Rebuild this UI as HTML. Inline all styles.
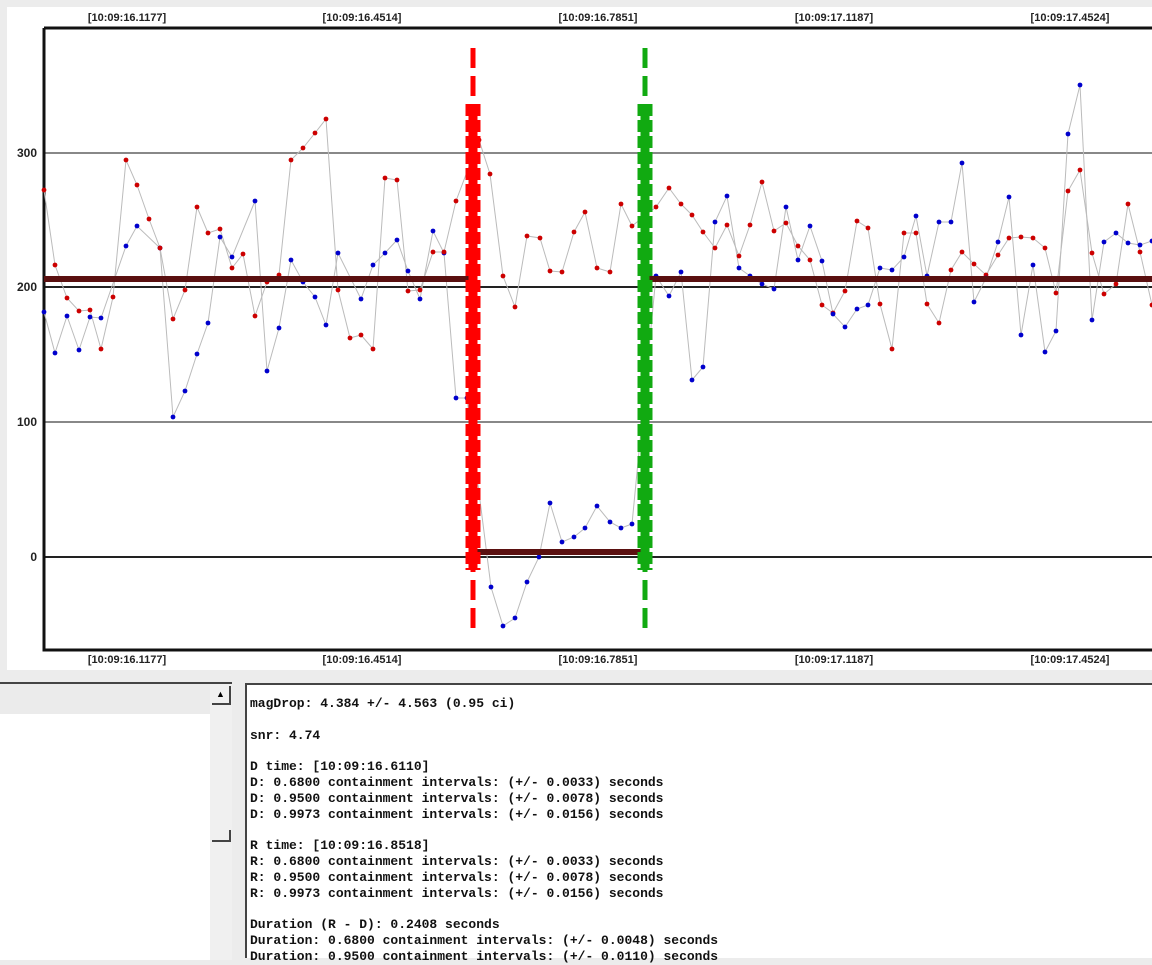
<!DOCTYPE html>
<html><head><meta charset="utf-8"><style>
html,body{margin:0;padding:0;width:1152px;height:958px;overflow:hidden;background:#ececec;}
#chart{position:absolute;left:0;top:0;}
.txt{position:absolute;left:245px;top:683px;width:907px;height:275px;background:#fff;border-top:2px solid #444;border-left:2px solid #444;font-family:"Liberation Mono",monospace;font-size:13px;font-weight:bold;line-height:15.8px;color:#111;white-space:pre;padding:11px 0 0 3px;box-sizing:border-box;}
.left{position:absolute;left:0;top:682px;width:232px;height:276px;background:#fff;border-top:2px solid #444;}
.left .strip{position:absolute;left:0;top:0;width:210px;height:30px;background:#ebebeb;}
.left .sb{position:absolute;left:210px;top:0;width:22px;height:276px;background:#f0f0f0;}
</style></head><body>
<svg id="chart" width="1152" height="672" xmlns="http://www.w3.org/2000/svg" font-family="Liberation Sans, sans-serif">
<rect x="7" y="7" width="1145" height="663" fill="#fff"/>
<g font-size="11" font-weight="bold" fill="#222" text-anchor="middle">
<text x="127" y="21">[10:09:16.1177]</text><text x="362" y="21">[10:09:16.4514]</text><text x="598" y="21">[10:09:16.7851]</text><text x="834" y="21">[10:09:17.1187]</text><text x="1070" y="21">[10:09:17.4524]</text>
<text x="127" y="663">[10:09:16.1177]</text><text x="362" y="663">[10:09:16.4514]</text><text x="598" y="663">[10:09:16.7851]</text><text x="834" y="663">[10:09:17.1187]</text><text x="1070" y="663">[10:09:17.4524]</text>
</g>
<g font-size="12" font-weight="bold" fill="#222" text-anchor="end">
<text x="37" y="157">300</text><text x="37" y="291">200</text><text x="37" y="426">100</text><text x="37" y="561">0</text>
</g>
<line x1="44" y1="153" x2="1152" y2="153" stroke="#888" stroke-width="2"/>
<line x1="44" y1="422" x2="1152" y2="422" stroke="#888" stroke-width="2"/>
<line x1="44" y1="287" x2="1152" y2="287" stroke="#222" stroke-width="2"/>
<line x1="44" y1="557" x2="1152" y2="557" stroke="#222" stroke-width="2"/>
<path d="M44 28H1152M44 28V650H1152" fill="none" stroke="#111" stroke-width="3"/>
<g id="data"></g>
<rect x="44" y="276" width="429" height="6" fill="#5a1010"/>
<rect x="645" y="276" width="507" height="6" fill="#5a1010"/>
<rect x="473" y="549" width="172" height="6" fill="#5a1010"/>
<line x1="473" y1="48" x2="473" y2="630" stroke="#f00" stroke-width="5" stroke-dasharray="20,8"/>
<line x1="473" y1="104" x2="473" y2="570" stroke="#f00" stroke-width="15" stroke-dasharray="12,4"/>
<line x1="473" y1="104" x2="473" y2="570" stroke="#f00" stroke-width="9"/>
<line x1="645" y1="48" x2="645" y2="630" stroke="#1a1" stroke-width="5" stroke-dasharray="20,8"/>
<line x1="645" y1="104" x2="645" y2="570" stroke="#1a1" stroke-width="15" stroke-dasharray="12,4"/>
<line x1="645" y1="104" x2="645" y2="570" stroke="#1a1" stroke-width="9"/>
</svg>
<div class="left"><div class="strip"></div><div class="sb"><div style="position:absolute;left:2px;top:2px;width:17px;height:17px;border-right:2px solid #444;border-bottom:2px solid #444;background:#f0f0f0;font-size:9px;text-align:center;line-height:17px;">&#9650;</div><div style="position:absolute;left:2px;top:146px;width:17px;height:10px;border-right:2px solid #444;border-bottom:2px solid #444;"></div></div></div>
<div class="txt">magDrop: 4.384 +/- 4.563 (0.95 ci)

snr: 4.74

D time: [10:09:16.6110]
D: 0.6800 containment intervals: (+/- 0.0033) seconds
D: 0.9500 containment intervals: (+/- 0.0078) seconds
D: 0.9973 containment intervals: (+/- 0.0156) seconds

R time: [10:09:16.8518]
R: 0.6800 containment intervals: (+/- 0.0033) seconds
R: 0.9500 containment intervals: (+/- 0.0078) seconds
R: 0.9973 containment intervals: (+/- 0.0156) seconds

Duration (R - D): 0.2408 seconds
Duration: 0.6800 containment intervals: (+/- 0.0048) seconds
Duration: 0.9500 containment intervals: (+/- 0.0110) seconds</div>
<script>
var P="r44,190 b44,312 r55,265 b55,353 r67,298 b67,316 r79,311 b79,350 r90,310 b90,317 r101,349 b101,318 r113,297 b126,246 r126,160 r137,185 b137,226 r149,219 b160,248 r160,248 r173,319 b173,417 r185,290 b185,391 r197,207 b197,354 r208,233 b208,323 r220,229 b220,237 r232,268 b232,257 r243,254 b255,201 r255,316 b267,371 r267,282 b279,328 r279,275 r291,160 b291,260 r303,148 b303,282 r315,133 b315,297 r326,119 b326,325 r338,290 b338,253 r350,338 b361,299 r361,335 r373,349 b373,265 r385,178 b385,253 r397,180 b397,240 r408,291 b408,271 r420,290 b420,299 r433,252 b433,231 b444,253 r444,252 r456,201 b456,398 b467,398 r479,140 r490,174 b491,587 r503,276 b503,626 b515,618 r515,307 b527,582 r527,236 b539,557 r540,238 b550,503 r550,271 b562,542 r562,272 b574,537 r574,232 b585,528 r585,212 b597,506 r597,268 b610,522 r610,272 b621,528 r621,204 b632,524 r632,226 r656,207 b656,276 r669,188 b669,296 r681,204 b681,272 r692,215 b692,380 r703,232 b703,367 r715,248 b715,222 r727,225 b727,196 r739,256 b739,268 r750,225 b750,276 r762,182 b762,284 r774,231 b774,289 r786,223 b786,207 r798,246 b798,260 r810,260 b810,226 r822,305 b822,261 r833,313 b833,314 r845,291 b845,327 r857,221 b857,309 r868,228 b868,305 r880,304 b880,268 r892,349 b892,270 r904,233 b904,257 r916,233 b916,216 r927,304 b927,276 r939,323 b939,222 r951,270 b951,222 r962,252 b962,163 r974,264 b974,302 r986,275 b986,278 r998,255 b998,242 r1009,238 b1009,197 r1021,237 b1021,335 r1033,238 b1033,265 r1045,248 b1045,352 r1056,293 b1056,331 r1068,191 b1068,134 r1080,170 b1080,85 r1092,253 b1092,320 r1104,294 b1104,242 r1116,284 b1116,233 r1128,204 b1128,243 r1140,252 b1140,245 r1152,305 b1152,241".split(" ");
var g=document.getElementById("data"),dr="",db="",c="";
P.forEach(function(p){var xy=p.slice(1).split(",");var isR=p[0]=="r";
if(isR){dr+=(dr?"L":"M")+xy[0]+" "+xy[1];}else{db+=(db?"L":"M")+xy[0]+" "+xy[1];}
c+='<circle cx="'+xy[0]+'" cy="'+xy[1]+'" r="2.4" fill="'+(isR?"#c00":"#00c")+'"/>';});
g.innerHTML='<path d="'+dr+'" fill="none" stroke="#bbb" stroke-width="1"/><path d="'+db+'" fill="none" stroke="#bbb" stroke-width="1"/>'+c;
</script>
</body></html>
